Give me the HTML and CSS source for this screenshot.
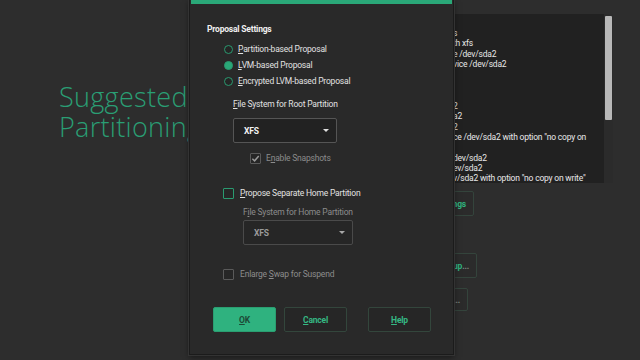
FILE: index.html
```html
<!DOCTYPE html>
<html lang="en">
<head>
  <meta charset="UTF-8">
  <meta name="viewport" content="width=device-width, initial-scale=1.0">
  <title>Suggested Partitioning</title>
  <link rel="stylesheet" href="styles.css">
</head>
<body>

<div class="app">
  <div class="intro">
    <h1>Suggested Partitioning</h1>
  </div>

  <div class="main">
    <div class="log">
      <div class="log-text">
        <div class="line">s</div>
        <div class="line">th xfs</div>
        <div class="line">e /dev/sda2</div>
        <div class="line">vice /dev/sda2</div>
        <div class="line"></div>
        <div class="line"></div>
        <div class="line"></div>
        <div class="line">2</div>
        <div class="line">a2</div>
        <div class="line">2</div>
        <div class="line">ce /dev/sda2 with option "no copy on</div>
        <div class="line"></div>
        <div class="line">dev/sda2</div>
        <div class="line">ev/sda2</div>
        <div class="line">v/sda2 with option "no copy on write"</div>
      </div>
      <div class="scroll"><div class="thumb"></div></div>
    </div>

    <div class="actions">
      <button class="ghost settings">Edit Proposal Settings</button>
      <button class="ghost guided">Guided Setup<span class="dots">...</span></button>
      <button class="ghost expert"><span class="dots">...</span></button>
    </div>
  </div>
</div>

<!-- 弹出的对话框 -->
<div class="dialog">
  <div class="dialog-bar"></div>
  <div class="dialog-body">
    <div class="title">Proposal Settings</div>

    <div class="radios">
      <label class="radio"><span class="dot"></span><span><u>P</u>artition-based Proposal</span></label>
      <label class="radio"><span class="dot on"></span><span><u>L</u>VM-based Proposal</span></label>
      <label class="radio"><span class="dot"></span><span><u>E</u>ncrypted LVM-based Proposal</span></label>
    </div>

    <div class="field root-fs">
      <div class="field-label"><u>F</u>ile System for Root Partition</div>
      <div class="select">
        <span>XFS</span>
        <span class="arrow"></span>
      </div>
    </div>

    <label class="check snapshots disabled"><span class="box checked">
      <svg viewBox="0 0 10 10" width="9" height="9"><path d="M1.5 5.2 L4 7.6 L8.6 2.2" fill="none" stroke="#9a9a9a" stroke-width="1.6"/></svg>
    </span><span>E<u>n</u>able Snapshots</span></label>

    <label class="check home"><span class="box green"></span><span><u>P</u>ropose Separate Home Partition</span></label>

    <div class="field home-fs disabled">
      <div class="field-label">F<u>i</u>le System for Home Partition</div>
      <div class="select">
        <span>XFS</span>
        <span class="arrow"></span>
      </div>
    </div>

    <label class="check swap disabled"><span class="box"></span><span>Enlarge <u>S</u>wap for Suspend</span></label>

    <div class="buttons">
      <button class="btn primary"><u>O</u>K</button>
      <button class="btn"><u>C</u>ancel</button>
      <button class="btn help"><u>H</u>elp</button>
    </div>
  </div>
</div>

</body>
</html>
```

FILE: styles.css
```css
body {
  margin: 0;
  width: 640px;
  height: 360px;
  overflow: hidden;
  background-color: #2d2d2d;
  font-family: Roboto, "Liberation Sans", sans-serif;
  color: #e6e6e6;
}

.app {
  display: grid;
  grid-template-columns: 440px 173px;
  height: 360px;
}

.intro h1 {
  margin: 82px 0 0 59px;
  width: 260px;
  font-family: "Open Sans", Lato, sans-serif;
  font-weight: 300;
  font-size: 27px;
  line-height: 30px;
  letter-spacing: 0.3px;
  color: #2a9e74;
}

.main {
  padding-top: 14px;
}

.log {
  display: flex;
  height: 169px;
  background-color: #212121;
  overflow: hidden;
}

.log-text {
  flex-grow: 1;
  padding: 14px 0 0 13px;
  font-size: 8.5px;
  letter-spacing: -0.2px;
  white-space: nowrap;
  color: #e8e8e8;
}

.line {
  height: 10.4px;
  line-height: 10.4px;
}

.scroll {
  width: 9px;
  background-color: #2b2b2b;
}

.thumb {
  height: 104px;
  margin: 2px 1px 0 1px;
  background-color: #b8b8b8;
  border-radius: 1px;
}

.actions {
  display: flex;
  flex-direction: column;
  align-items: flex-end;
}

.ghost {
  height: 25px;
  padding: 0 7px 0 0;
  background-color: #2b2b2b;
  border: 1px solid #34443c;
  border-radius: 2px;
  font-family: Roboto, "Liberation Sans", sans-serif;
  font-size: 8.5px;
  letter-spacing: -0.2px;
  font-weight: bold;
  color: #30b27f;
  white-space: nowrap;
}

.ghost .dots {
  color: #7c8a84;
}

.settings {
  margin: 8px 139px 0 0;
}

.guided {
  margin: 37px 136px 0 0;
}

.expert {
  width: 40px;
  height: 23px;
  margin: 10px 145px 0 0;
  text-align: right;
}

/* Dialog */
.dialog {
  position: absolute;
  left: 189px;
  top: 0;
  width: 263px;
  height: 354px;
  background-color: #292929;
  border: 1px solid #1b1b1b;
  border-top: none;
  box-shadow: 0 0 0 1px #333, 0 2px 6px rgba(0, 0, 0, 0.5);
}

.dialog-bar {
  height: 4px;
  margin: 0 1px;
  background-color: #2aa878;
}

.dialog-body {
  display: flex;
  flex-direction: column;
  align-items: flex-start;
  padding: 19px 0 0 17px;
  font-size: 8.5px;
  letter-spacing: -0.2px;
}

.title {
  font-weight: bold;
  line-height: 12px;
  color: #f0f0f0;
}

.radios {
  display: flex;
  flex-direction: column;
  margin: 6px 0 0 17px;
}

.radio {
  display: flex;
  align-items: center;
  gap: 5px;
  height: 16px;
  color: #e2e2e2;
}

.dot {
  width: 7px;
  height: 7px;
  border: 1px solid #2a9a70;
  border-radius: 50%;
  background-color: #252525;
}

.dot.on {
  background-color: #2aa878;
}

.field {
  display: flex;
  flex-direction: column;
  align-items: flex-start;
}

.field-label {
  line-height: 12px;
  color: #e2e2e2;
}

.root-fs {
  margin: 9px 0 0 26px;
}

.select {
  display: flex;
  align-items: center;
  justify-content: space-between;
  box-sizing: border-box;
  width: 104px;
  height: 25px;
  margin-top: 8px;
  padding: 0 7px 0 10px;
  background-color: #222;
  border: 1px solid #555;
  border-radius: 2px;
  font-weight: bold;
  color: #f2f2f2;
}

.arrow {
  width: 0;
  height: 0;
  border-left: 3px solid transparent;
  border-right: 3px solid transparent;
  border-top: 3px solid #e0e0e0;
}

.check {
  display: flex;
  align-items: center;
  gap: 6px;
  height: 14px;
  color: #e2e2e2;
}

.box {
  display: flex;
  align-items: center;
  justify-content: center;
  box-sizing: border-box;
  width: 11px;
  height: 11px;
  border: 1px solid #5a5a5a;
  border-radius: 1px;
  background-color: #262626;
}

.box.green {
  border-color: #2a9a70;
}

.check.disabled,
.field.disabled .field-label {
  color: #8c8c8c;
}

.snapshots {
  margin: 8px 0 0 43px;
  gap: 5px;
}

.home {
  margin: 21px 0 0 16px;
}

.home-fs {
  margin: 6px 0 0 36px;
}

.home-fs .select {
  width: 110px;
  margin-top: 2px;
  background-color: #262626;
  border-color: #4a4a4a;
  color: #9a9a9a;
}

.home-fs .arrow {
  border-top-color: #a8a8a8;
}

.swap {
  margin: 22px 0 0 16px;
}

.buttons {
  display: flex;
  margin: 26px 0 0 6px;
}

.btn {
  width: 63px;
  height: 25px;
  margin-right: 8px;
  background-color: #262626;
  border: 1px solid #33463c;
  border-radius: 2px;
  font-family: Roboto, "Liberation Sans", sans-serif;
  font-size: 8.5px;
  letter-spacing: -0.2px;
  font-weight: bold;
  color: #35b884;
}

.btn.primary {
  background-color: #2fb27f;
  border-color: #2a9e71;
  color: #1d4a36;
}

.btn.help {
  margin-left: 13px;
}
```
